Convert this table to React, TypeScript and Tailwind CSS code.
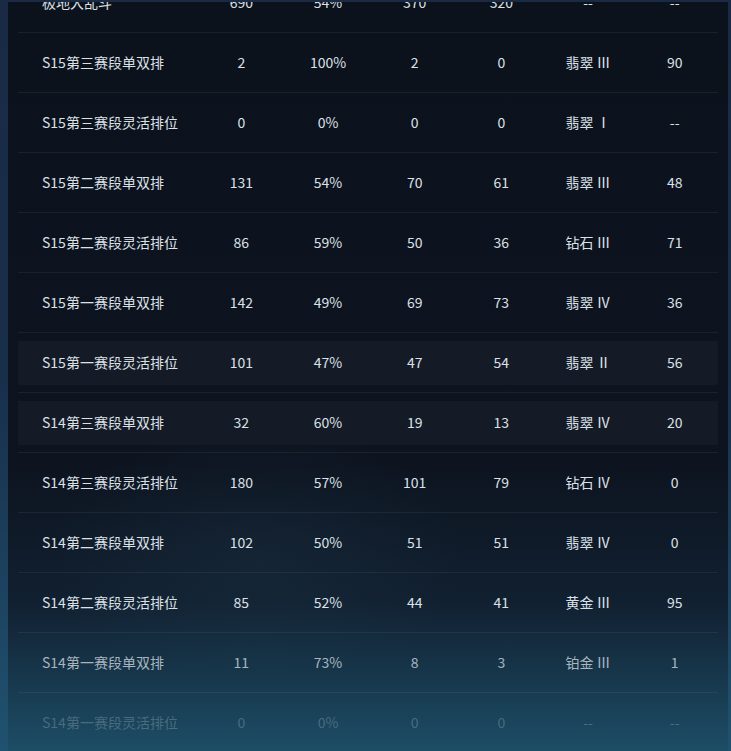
const rows = [
  { name: "极地大乱斗", games: "690", rate: "54%", win: "370", lose: "320", rank: "--", points: "--" },
  { name: "S15第三赛段单双排", games: "2", rate: "100%", win: "2", lose: "0", rank: "翡翠 Ⅲ", points: "90" },
  { name: "S15第三赛段灵活排位", games: "0", rate: "0%", win: "0", lose: "0", rank: "翡翠 Ⅰ", points: "--" },
  { name: "S15第二赛段单双排", games: "131", rate: "54%", win: "70", lose: "61", rank: "翡翠 Ⅲ", points: "48" },
  { name: "S15第二赛段灵活排位", games: "86", rate: "59%", win: "50", lose: "36", rank: "钻石 Ⅲ", points: "71" },
  { name: "S15第一赛段单双排", games: "142", rate: "49%", win: "69", lose: "73", rank: "翡翠 Ⅳ", points: "36" },
  { name: "S15第一赛段灵活排位", games: "101", rate: "47%", win: "47", lose: "54", rank: "翡翠 Ⅱ", points: "56", hl: true },
  { name: "S14第三赛段单双排", games: "32", rate: "60%", win: "19", lose: "13", rank: "翡翠 Ⅳ", points: "20", hl: true },
  { name: "S14第三赛段灵活排位", games: "180", rate: "57%", win: "101", lose: "79", rank: "钻石 Ⅳ", points: "0" },
  { name: "S14第二赛段单双排", games: "102", rate: "50%", win: "51", lose: "51", rank: "翡翠 Ⅳ", points: "0" },
  { name: "S14第二赛段灵活排位", games: "85", rate: "52%", win: "44", lose: "41", rank: "黄金 Ⅲ", points: "95" },
  { name: "S14第一赛段单双排", games: "11", rate: "73%", win: "8", lose: "3", rank: "铂金 Ⅲ", points: "1", fade: "text-[#dce0e7]/75" },
  { name: "S14第一赛段灵活排位", games: "0", rate: "0%", win: "0", lose: "0", rank: "--", points: "--", fade: "text-[#dce0e7]/25" },
];

export default function App() {
  return (
    <div
      className="h-[751px] w-[731px] overflow-hidden bg-gradient-to-b from-[#1a2a45] via-[#182f4a] to-[#1f5270] pl-2 pt-[2px]"
      style={{ fontFamily: '"Noto Sans CJK SC", "Noto Sans", sans-serif' }}
    >
      <div className="relative h-[749px] w-[720px] overflow-hidden bg-[linear-gradient(180deg,#0c121c_0%,#0d1420_62%,#112030_80%,#1a4259_95%,#1d4d66_100%)]">
        {/* faint swirl */}
        <div className="pointer-events-none absolute left-[40px] top-[420px] h-[260px] w-[420px] rounded-full bg-[radial-gradient(ellipse_at_center,rgba(60,110,140,0.1),transparent_70%)]" />

        <div className="relative -mt-[29px] px-[10px]">
          {rows.map((r) => (
            <div key={r.name} className="border-b border-white/[0.06] pt-2 pb-[7px]">
              <div
                className={`grid h-[44px] grid-cols-[180px_repeat(6,1fr)] items-center pb-px text-[14px] ${
                  r.fade ?? "text-[#dce0e7]"
                } ${r.hl ? "bg-[#151b26]" : ""}`}
              >
                <div className="pl-6 whitespace-nowrap">{r.name}</div>
                <div className="text-center">{r.games}</div>
                <div className="text-center">{r.rate}</div>
                <div className="text-center">{r.win}</div>
                <div className="text-center">{r.lose}</div>
                <div className="text-center whitespace-nowrap">{r.rank}</div>
                <div className="text-center">{r.points}</div>
              </div>
            </div>
          ))}
        </div>
      </div>
    </div>
  );
}
